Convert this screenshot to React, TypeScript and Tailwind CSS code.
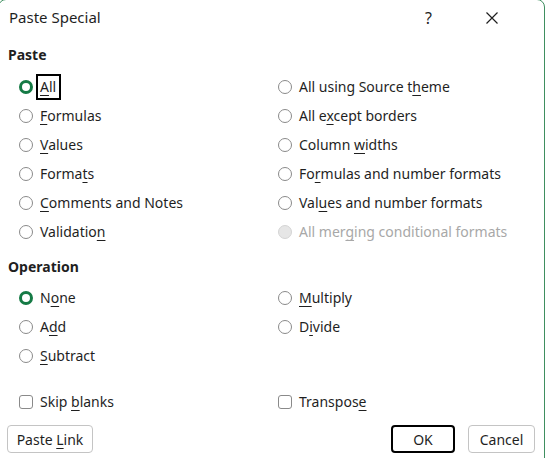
import type { ReactNode } from 'react';

type Opt = { label: ReactNode; checked?: boolean; disabled?: boolean; focus?: boolean };

function Key({ children }: { children: ReactNode }) {
  return <span className="underline underline-offset-[3px] decoration-1">{children}</span>;
}

function Radio({ checked, disabled }: { checked?: boolean; disabled?: boolean }) {
  if (checked) {
    return <span className="block w-[14px] h-[14px] rounded-full border-[3.5px] border-[#157a45] bg-white shrink-0" />;
  }
  if (disabled) {
    return <span className="block w-[14px] h-[14px] rounded-full border border-[#d4d4d4] bg-[#e6e6e6] shrink-0" />;
  }
  return <span className="block w-[14px] h-[14px] rounded-full border border-[#8a8a8a] bg-white shrink-0" />;
}

function RadioRow({ label, checked, disabled, focus }: Opt) {
  return (
    <div className="h-[29px] flex items-center gap-[7px]">
      <Radio checked={checked} disabled={disabled} />
      <span
        className={
          (disabled ? 'text-[#a8a8a8] ' : 'text-[#1f1f1f] ') +
          (focus ? 'outline-2 outline-black pl-[2px] pr-[3px] -ml-[2px] py-[1px] leading-[20px]' : '')
        }
      >
        {label}
      </span>
    </div>
  );
}

function Check({ label }: { label: ReactNode }) {
  return (
    <div className="h-[29px] flex items-center gap-[7px]">
      <span className="block w-[14px] h-[14px] rounded-[3px] border border-[#8a8a8a] bg-white shrink-0" />
      <span className="text-[#1f1f1f]">{label}</span>
    </div>
  );
}

function Button({ children, primary, w }: { children: ReactNode; primary?: boolean; w: string }) {
  return (
    <button
      className={
        'h-[28px] rounded-[4px] bg-white text-[#1f1f1f] flex items-center justify-center ' +
        (primary ? 'border-2 border-black ' : 'border border-[#c4c4c4] ') +
        w
      }
    >
      <span>{children}</span>
    </button>
  );
}

const pasteLeft: Opt[] = [
  { label: <><Key>A</Key>ll</>, checked: true, focus: true },
  { label: <><Key>F</Key>ormulas</> },
  { label: <><Key>V</Key>alues</> },
  { label: <>Forma<Key>t</Key>s</> },
  { label: <><Key>C</Key>omments and Notes</> },
  { label: <>Validatio<Key>n</Key></> },
];

const pasteRight: Opt[] = [
  { label: <>All using Source t<Key>h</Key>eme</> },
  { label: <>All e<Key>x</Key>cept borders</> },
  { label: <>Column <Key>w</Key>idths</> },
  { label: <>Fo<Key>r</Key>mulas and number formats</> },
  { label: <>Val<Key>u</Key>es and number formats</> },
  { label: <>All mer<Key>g</Key>ing conditional formats</>, disabled: true },
];

export default function App() {
  return (
    <div
      className="w-[547px] h-[458px] overflow-hidden bg-white relative text-[14px]"
      style={{ fontFamily: '"Noto Sans", "Open Sans", sans-serif' }}
    >
      <div className="-ml-[2px] -mt-[1px] w-[547px] h-[480px] border border-[#3f8f60] rounded-[8px] bg-white">
        {/* title bar */}
        <div className="h-[35px] flex items-center pl-[10px]">
          <span className="text-[15px] text-[#1f1f1f] flex-1">Paste Special</span>
          <span className="text-[16px] text-[#1f1f1f] w-[10px]">?</span>
          <svg width="12" height="12" viewBox="0 0 12 12" className="text-[#1f1f1f] ml-[51px] mr-[46px]">
            <path d="M0.5 0.5L11.5 11.5M11.5 0.5L0.5 11.5" stroke="currentColor" strokeWidth="1.2" />
          </svg>
        </div>

        <div className="pl-[9px] pr-[9px]">
          <div className="font-bold text-[#1f1f1f] leading-[20px] mt-[10px]">Paste</div>
          <div className="grid grid-cols-[259px_1fr] pl-[11px] mt-[7px]">
            <div>
              {pasteLeft.map((o, i) => <RadioRow key={i} {...o} />)}
            </div>
            <div>
              {pasteRight.map((o, i) => <RadioRow key={i} {...o} />)}
            </div>
          </div>

          <div className="font-bold text-[#1f1f1f] leading-[20px] mt-[11px]">Operation</div>
          <div className="grid grid-cols-[259px_1fr] pl-[11px] mt-[6px]">
            <div>
              <RadioRow label={<>N<Key>o</Key>ne</>} checked />
              <RadioRow label={<>A<Key>d</Key>d</>} />
              <RadioRow label={<><Key>S</Key>ubtract</>} />
            </div>
            <div>
              <RadioRow label={<><Key>M</Key>ultiply</>} />
              <RadioRow label={<>D<Key>i</Key>vide</>} />
            </div>
          </div>

          <div className="grid grid-cols-[259px_1fr] pl-[11px] mt-[17px]">
            <Check label={<>Skip <Key>b</Key>lanks</>} />
            <Check label={<>Transpos<Key>e</Key></>} />
          </div>

          <div className="flex items-center mt-[9px] -ml-[1px]">
            <Button w="w-[86px]">Paste <Key>L</Key>ink</Button>
            <div className="flex-1" />
            <Button primary w="w-[64px]">OK</Button>
            <div className="w-[13px]" />
            <Button w="w-[67px]">Cancel</Button>
          </div>
        </div>
      </div>
    </div>
  );
}
